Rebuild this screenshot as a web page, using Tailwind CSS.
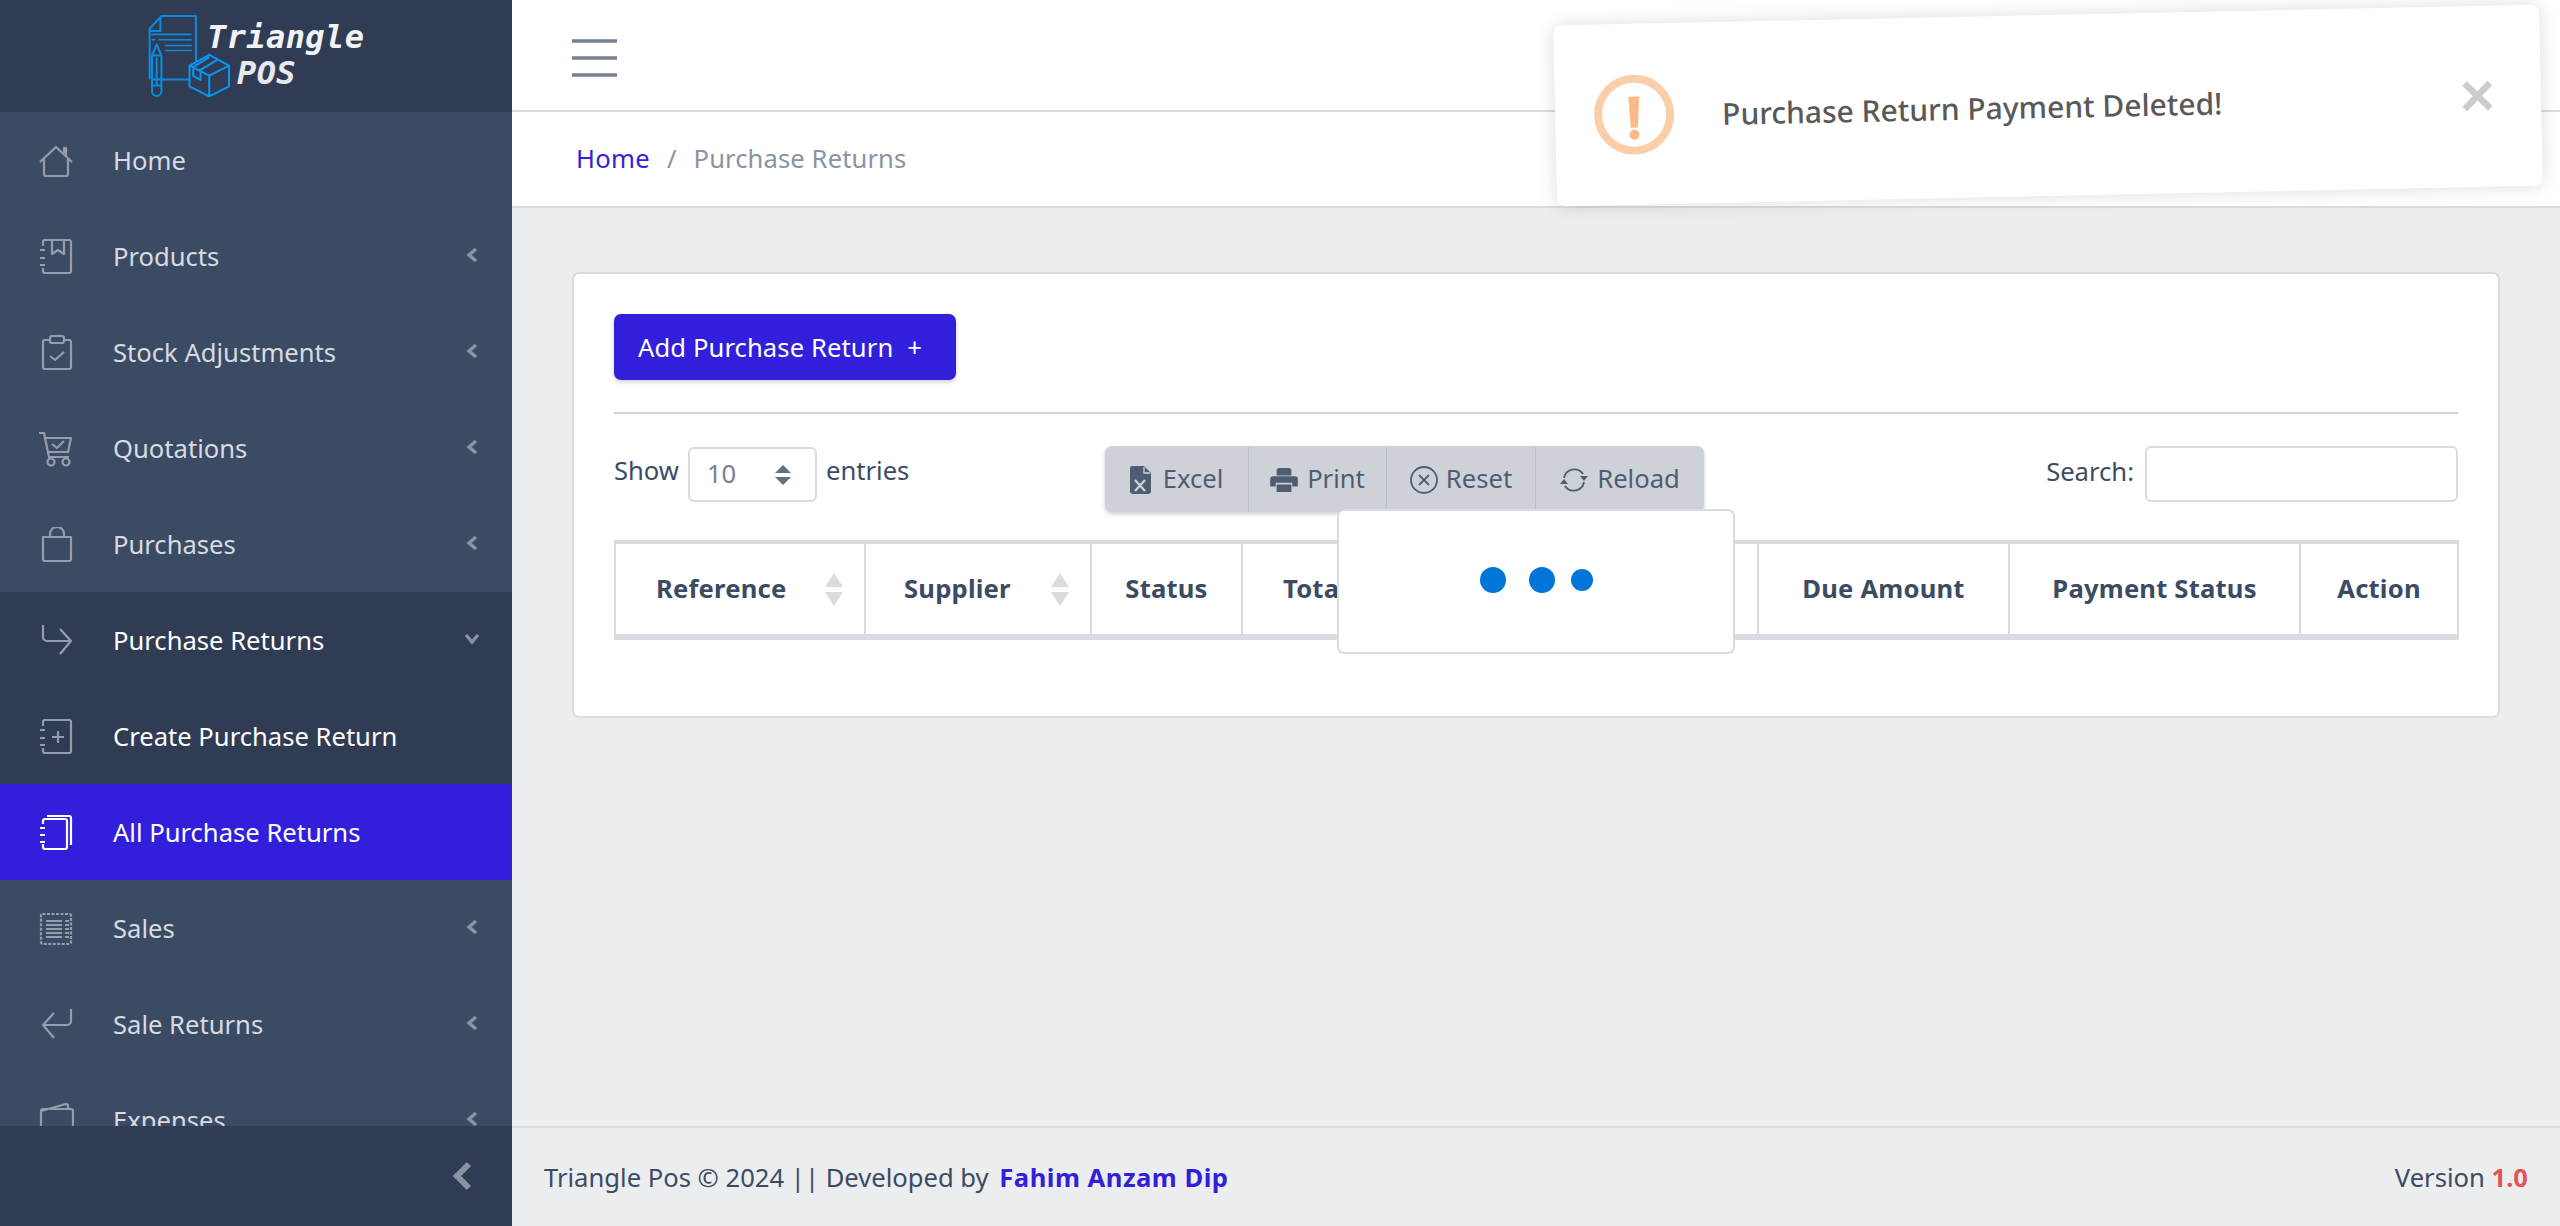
<!DOCTYPE html>
<html lang="en">
<head>
  <meta charset="UTF-8" />
  <title>Purchase Returns - Triangle POS</title>
  <script src="https://cdn.jsdelivr.net/npm/@tailwindcss/browser@4"></script>
</head>
<body class="bg-[#ebedef] font-['Noto_Sans',sans-serif] text-[25.6px] text-[#3c4b64]">
<div class="relative flex h-[1226px] overflow-hidden">

  <!-- Sidebar -->
  <aside class="flex h-full w-[512px] shrink-0 flex-col bg-[#3c4b64] text-[#d8dbe0]">
    <div class="flex h-[112px] shrink-0 items-start bg-[#303c54] pl-[143px] pt-[12px]">
      <svg class="shrink-0" width="87" height="87" viewBox="40 35 260 260" fill="none" stroke="#0a8be0" stroke-width="6" stroke-linejoin="round">
        <path d="M60 237V85L95 47H198V182M68 237H180M60 92H92V50"/>
        <path d="M65 102H185M66 118H76M86 118H186M105 135H186M105 150H186" stroke-width="5"/>
        <path d="M67 165L81 132L95 165V272a14 14 0 0 1-28 0ZM67 165H95M81 170V252M67 255H95"/>
        <path d="M238 163L297 195V257L238 287L179 257V195ZM179 195L238 225L297 195M238 225V287M190 200V226L212 238V212L238 225M208 210L262 178M190 200L238 170" stroke="#0a96f0"/>
      </svg>
      <div class="ml-[-23px] font-['DejaVu_Sans_Mono',monospace] text-[32px] font-bold italic leading-[36px] tracking-[0.4px] text-[#f2f3f5]">
        <div class="mt-[7px]">Triangle</div>
        <div class="ml-[30px] text-[#e8e9ec]">POS</div>
      </div>
    </div>

    <nav class="min-h-0 flex-1 overflow-hidden">
      <a class="flex h-[96px] items-center pl-[38px] pr-[34px] pt-[2px]">
        <svg class="mr-[39px] shrink-0" width="36" height="36" viewBox="0 0 36 36" fill="none" stroke="#959dac" stroke-width="2.2" stroke-linejoin="round"><path d="M2 19L18 4L34 19M6 16V31a2 2 0 0 0 2 2H28a2 2 0 0 0 2-2V16M26 10V5h2v8"/></svg>
        <span>Home</span>
      </a>
      <a class="flex h-[96px] items-center pl-[38px] pr-[34px] pt-[2px]">
        <svg class="mr-[39px] shrink-0" width="36" height="36" viewBox="0 0 36 36" fill="none" stroke="#959dac" stroke-width="2.2" stroke-linejoin="round"><path d="M5 7V3a2 2 0 0 1 2-2H31a2 2 0 0 1 2 2V32a2 2 0 0 1-2 2H7a2 2 0 0 1-2-2V29M14 1V15L20 11L26 15V1M2 11H7M2 19H7M2 26H7"/></svg>
        <span>Products</span>
        <svg class="ml-auto mt-[-4px]" width="12" height="16" viewBox="0 0 12 16" fill="none" stroke="#8a93a2" stroke-width="3.4"><path d="M10 2L3 8L10 14"/></svg>
      </a>
      <a class="flex h-[96px] items-center pl-[38px] pr-[34px] pt-[2px]">
        <svg class="mr-[39px] shrink-0" width="36" height="36" viewBox="0 0 36 36" fill="none" stroke="#959dac" stroke-width="2.2" stroke-linejoin="round"><path d="M11 5H7a2 2 0 0 0-2 2V32a2 2 0 0 0 2 2H31a2 2 0 0 0 2-2V7a2 2 0 0 0-2-2H27"/><rect x="12" y="1" width="14" height="7" rx="2"/><path d="M12 21L17 25L26 17"/></svg>
        <span>Stock Adjustments</span>
        <svg class="ml-auto mt-[-4px]" width="12" height="16" viewBox="0 0 12 16" fill="none" stroke="#8a93a2" stroke-width="3.4"><path d="M10 2L3 8L10 14"/></svg>
      </a>
      <a class="flex h-[96px] items-center pl-[38px] pr-[34px] pt-[2px]">
        <svg class="mr-[39px] shrink-0" width="36" height="36" viewBox="0 0 36 36" fill="none" stroke="#959dac" stroke-width="2.2" stroke-linejoin="round"><path d="M1 2H6L11 26H31M8 7H33L30 21H10"/><circle cx="13" cy="31" r="3.5"/><circle cx="28" cy="31" r="3.5"/><path d="M14 13L19 17L26 10"/></svg>
        <span>Quotations</span>
        <svg class="ml-auto mt-[-4px]" width="12" height="16" viewBox="0 0 12 16" fill="none" stroke="#8a93a2" stroke-width="3.4"><path d="M10 2L3 8L10 14"/></svg>
      </a>
      <a class="flex h-[96px] items-center pl-[38px] pr-[34px] pt-[2px]">
        <svg class="mr-[39px] shrink-0" width="36" height="36" viewBox="0 0 36 36" fill="none" stroke="#959dac" stroke-width="2.2" stroke-linejoin="round"><path d="M5 10H33V32a2 2 0 0 1-2 2H7a2 2 0 0 1-2-2ZM12 10V7a7 7 0 0 1 14 0V10"/></svg>
        <span>Purchases</span>
        <svg class="ml-auto mt-[-4px]" width="12" height="16" viewBox="0 0 12 16" fill="none" stroke="#8a93a2" stroke-width="3.4"><path d="M10 2L3 8L10 14"/></svg>
      </a>

      <div class="bg-[#303c54] text-white">
        <a class="flex h-[96px] items-center pl-[38px] pr-[32px] pt-[2px]">
          <svg class="mr-[39px] shrink-0" width="36" height="36" viewBox="0 0 36 36" fill="none" stroke="#959dac" stroke-width="2.2" stroke-linejoin="round"><path d="M5 2V14a4 4 0 0 0 4 4H33M22 6L33 18L22 31"/></svg>
          <span>Purchase Returns</span>
          <svg class="ml-auto mt-[-4px]" width="16" height="12" viewBox="0 0 16 12" fill="none" stroke="#8a93a2" stroke-width="3.4"><path d="M2 2L8 9L14 2"/></svg>
        </a>
        <a class="flex h-[96px] items-center pl-[38px] pr-[34px] pt-[2px]">
          <svg class="mr-[39px] shrink-0" width="36" height="36" viewBox="0 0 36 36" fill="none" stroke="#959dac" stroke-width="2.2" stroke-linejoin="round"><path d="M5 7V3a2 2 0 0 1 2-2H31a2 2 0 0 1 2 2V32a2 2 0 0 1-2 2H7a2 2 0 0 1-2-2V29M2 11H7M2 19H7M2 26H7M14 18H26M20 12V24"/></svg>
          <span>Create Purchase Return</span>
        </a>
      </div>

      <a class="flex h-[96px] items-center bg-[#321fdb] pl-[38px] pr-[34px] pt-[2px] text-white">
        <svg class="mr-[39px] shrink-0" width="36" height="36" viewBox="0 0 36 36" fill="none" stroke="#ffffff" stroke-width="2.2" stroke-linejoin="round"><path d="M5 9V6a2 2 0 0 1 2-2H27a2 2 0 0 1 2 2V32a2 2 0 0 1-2 2H7a2 2 0 0 1-2-2V29M9 1H31a2 2 0 0 1 2 2V30M2 13H7M2 20H7M2 27H7"/></svg>
        <span>All Purchase Returns</span>
      </a>

      <a class="flex h-[96px] items-center pl-[38px] pr-[34px] pt-[2px]">
        <svg class="mr-[39px] shrink-0" width="36" height="36" viewBox="0 0 36 36" fill="none" stroke="#959dac" stroke-width="2.2" stroke-linejoin="round"><rect x="3" y="3" width="30" height="30" rx="1.5" stroke-dasharray="3 1.5"/><path d="M8 10H24M8 14H24M8 18H24M8 22H24M8 26H24M27 10H31M27 14H31M27 18H31M27 22H31M27 26H31"/></svg>
        <span>Sales</span>
        <svg class="ml-auto mt-[-4px]" width="12" height="16" viewBox="0 0 12 16" fill="none" stroke="#8a93a2" stroke-width="3.4"><path d="M10 2L3 8L10 14"/></svg>
      </a>
      <a class="flex h-[96px] items-center pl-[38px] pr-[34px] pt-[2px]">
        <svg class="mr-[39px] shrink-0" width="36" height="36" viewBox="0 0 36 36" fill="none" stroke="#959dac" stroke-width="2.2" stroke-linejoin="round"><path d="M33 2V14a4 4 0 0 1-4 4H5M16 6L5 18L16 31"/></svg>
        <span>Sale Returns</span>
        <svg class="ml-auto mt-[-4px]" width="12" height="16" viewBox="0 0 12 16" fill="none" stroke="#8a93a2" stroke-width="3.4"><path d="M10 2L3 8L10 14"/></svg>
      </a>
      <a class="flex h-[96px] items-center pl-[38px] pr-[34px] pt-[2px]">
        <svg class="mr-[39px] shrink-0" width="36" height="36" viewBox="0 0 36 36" fill="none" stroke="#959dac" stroke-width="2.2" stroke-linejoin="round"><path d="M3 8V32a2 2 0 0 0 2 2H33a2 2 0 0 0 2-2V8a2 2 0 0 0-2-2H5a2 2 0 0 0-2 2L28 1a2 2 0 0 1 2 2V6"/></svg>
        <span>Expenses</span>
        <svg class="ml-auto mt-[-4px]" width="12" height="16" viewBox="0 0 12 16" fill="none" stroke="#8a93a2" stroke-width="3.4"><path d="M10 2L3 8L10 14"/></svg>
      </a>
    </nav>

    <div class="flex h-[100px] shrink-0 items-center justify-end bg-[#303c54] pr-[40px]">
      <svg width="20" height="30" viewBox="0 0 20 30" fill="none" stroke="#8a93a2" stroke-width="6"><path d="M17 3L5 15L17 27"/></svg>
    </div>
  </aside>

  <!-- Main -->
  <div class="flex min-w-0 flex-1 flex-col">
    <header class="flex h-[112px] shrink-0 items-center border-b-2 border-[#d8dbe0] bg-white pl-[60px] pt-[5px]">
      <svg width="45" height="38" viewBox="0 0 45 38" fill="none" stroke="#768192" stroke-width="3.4"><path d="M0 2H45M0 19H45M0 36H45"/></svg>
    </header>
    <div class="flex h-[96px] shrink-0 items-center border-b-2 border-[#d8dbe0] bg-white pl-[64px]">
      <a class="tracking-[0.3px] text-[#321fdb]">Home</a>
      <span class="px-[17px] text-[#8a93a2]">/</span>
      <span class="tracking-[0.1px] text-[#8a93a2]">Purchase Returns</span>
    </div>

    <main class="min-h-0 flex-1 px-[60px] pt-[64px]">
      <div class="rounded-[7px] border-2 border-[#d8dbe0] bg-white px-[40px] pb-[76px] pt-[40px]">
        <button class="flex h-[66px] w-[342px] items-center gap-[14px] rounded-[7px] bg-[#321fdb] pl-[24px] pt-[2px] text-white shadow-[0_2px_4px_rgba(0,0,21,0.2)]">
          <span class="tracking-[0.1px]">Add Purchase Return</span><span>+</span>
        </button>
        <div class="mb-[32px] mt-[32px] h-[2px] bg-[#cfd1d7]"></div>

        <div class="flex items-start">
          <div class="flex w-[491px] shrink-0 items-center">
            <span class="mb-[5px]">Show</span>
            <div class="ml-[9px] mr-[9px] mt-[1px] flex h-[55px] w-[129px] items-center justify-between rounded-[6px] border-2 border-[#d8dbe0] pl-[17px] pr-[24px] text-[#768192]">
              <span>10</span>
              <svg width="16" height="20" viewBox="0 0 16 20" fill="#636f83"><path d="M8 0L16 8H0ZM8 20L0 12H16Z"/></svg>
            </div>
            <span class="mb-[5px]">entries</span>
          </div>

          <div class="mb-[28px] flex h-[66px] w-[599px] shrink-0 rounded-[7px] bg-[#ced2d8] pt-[1px] text-[#4f5d73] shadow-[0_2px_4px_rgba(0,0,21,0.2)]">
            <div class="flex w-[143px] items-center justify-center gap-[12px]">
              <svg width="21" height="28" viewBox="0 0 21 28" fill="#4f5d73"><path d="M2 0H14L21 7V25a3 3 0 0 1-3 3H3a3 3 0 0 1-3-3V2a2 2 0 0 1 2-2Z"/><path d="M5 14L15 25M15 14L5 25" stroke="#ced2d8" stroke-width="2.2"/><path d="M14 1V7H20" stroke="#ced2d8" stroke-width="1.3" fill="none"/></svg>
              <span>Excel</span>
            </div>
            <div class="flex w-[138px] items-center justify-center gap-[9px] border-l border-[#b9bec7]">
              <svg width="28" height="24" viewBox="0 0 30 26" fill="#4f5d73"><path d="M7 8V3a3 3 0 0 1 3-3H20a3 3 0 0 1 3 3V8H7ZM3 9H27a3 3 0 0 1 3 3V20H24V16H6V20H0V12a3 3 0 0 1 3-3ZM7 18H23V26H7Z"/></svg>
              <span>Print</span>
            </div>
            <div class="flex w-[149px] items-center justify-center gap-[8px] border-l border-[#b9bec7]">
              <svg width="28" height="28" viewBox="0 0 28 28" fill="none" stroke="#4f5d73" stroke-width="1.8"><circle cx="14" cy="14" r="13"/><path d="M9 9L19 19M19 9L9 19"/></svg>
              <span>Reset</span>
            </div>
            <div class="flex flex-1 items-center justify-center gap-[9px] border-l border-[#b9bec7]">
              <svg width="28" height="24" viewBox="0 0 28 24" fill="none" stroke="#4f5d73" stroke-width="1.9"><path d="M4 10A10.5 10.5 0 0 1 23 6M24 14A10.5 10.5 0 0 1 5 18"/><path d="M20 8H28L24 13ZM0 16H8L4 11Z" fill="#4f5d73" stroke="none"/></svg>
              <span>Reload</span>
            </div>
          </div>

          <div class="ml-auto flex items-center gap-[11px]">
            <label class="mb-[3px]">Search:</label>
            <input class="h-[56px] w-[313px] rounded-[6px] border-2 border-[#d8dbe0] bg-white" type="text" />
          </div>
        </div>

        <table class="w-[1843px] table-fixed border-collapse tracking-[0.2px]">
          <colgroup>
            <col class="w-[250px]" /><col class="w-[226px]" /><col class="w-[151px]" /><col class="w-[229px]" />
            <col class="w-[287px]" /><col class="w-[251px]" /><col class="w-[291px]" /><col class="w-[158px]" />
          </colgroup>
          <thead>
            <tr class="h-[95px] border-b-[6px] border-t-4 border-[#d8dbe0]">
              <th class="border-x-2 border-[#d8dbe0] pl-[40px] pt-[1px] text-left font-bold">
                <div class="flex items-center justify-between pr-[21px]"><span>Reference</span>
                  <svg width="18" height="33" viewBox="0 0 18 33" fill="#d8dbe0"><path d="M9 0L18 14H0ZM9 33L0 19H18Z"/></svg></div>
              </th>
              <th class="border-x-2 border-[#d8dbe0] pl-[38px] pt-[1px] text-left font-bold">
                <div class="flex items-center justify-between pr-[21px]"><span>Supplier</span>
                  <svg width="18" height="33" viewBox="0 0 18 33" fill="#d8dbe0"><path d="M9 0L18 14H0ZM9 33L0 19H18Z"/></svg></div>
              </th>
              <th class="border-x-2 border-[#d8dbe0] pt-[1px] text-center font-bold">Status</th>
              <th class="border-x-2 border-[#d8dbe0] pl-[40px] pt-[1px] text-left font-bold">Total</th>
              <th class="border-x-2 border-[#d8dbe0] pt-[1px] text-center font-bold">Paid Amount</th>
              <th class="border-x-2 border-[#d8dbe0] pt-[1px] text-center font-bold">Due Amount</th>
              <th class="border-x-2 border-[#d8dbe0] pt-[1px] text-center font-bold">Payment Status</th>
              <th class="border-x-2 border-[#d8dbe0] pt-[1px] text-center font-bold">Action</th>
            </tr>
          </thead>
        </table>
      </div>
    </main>

    <footer class="flex h-[100px] shrink-0 items-center justify-between border-t-2 border-[#d8dbe0] px-[32px] pt-[2px]">
      <div>Triangle Pos © 2024 || Developed by <a class="ml-[4px] font-bold tracking-[0.5px] text-[#321fdb]">Fahim Anzam Dip</a></div>
      <div>Version <span class="font-bold text-[#e55353]">1.0</span></div>
    </footer>
  </div>

  <!-- DataTables processing box -->
  <div class="absolute left-[1337px] top-[509px] flex h-[145px] w-[398px] items-center justify-center rounded-[7px] border-2 border-[#d8dbe0] bg-white pb-[3px]">
    <span class="h-[26px] w-[26px] rounded-full bg-[#0275d8]"></span>
    <span class="ml-[23px] h-[26px] w-[26px] rounded-full bg-[#0275d8]"></span>
    <span class="ml-[16px] h-[22px] w-[22px] rounded-full bg-[#0275d8]"></span>
  </div>

  <!-- Toast, caught mid animation -->
  <div class="absolute left-[1555px] top-[15px] flex h-[181px] w-[986px] rotate-[-1.2deg] items-center rounded-[8px] bg-white pl-[39px] pr-[46px] shadow-[0_0_18px_rgba(0,0,0,0.14)]">
    <svg class="shrink-0" width="80" height="80" viewBox="0 0 80 80" fill="none"><circle cx="40" cy="40" r="36" stroke="#facea8" stroke-width="8"/><path d="M34.5 22H45.5L43.5 53H36.5Z" fill="#f8bb86"/><circle cx="40" cy="60" r="5" fill="#f8bb86"/></svg>
    <span class="ml-[48px] mt-[2px] text-[30px] font-medium text-[#595959]">Purchase Return Payment Deleted!</span>
    <span class="ml-auto mt-[-2px] font-['Liberation_Sans',sans-serif] text-[60px] font-bold leading-none text-[#cccccc]">×</span>
  </div>
</div>
</body>
</html>
